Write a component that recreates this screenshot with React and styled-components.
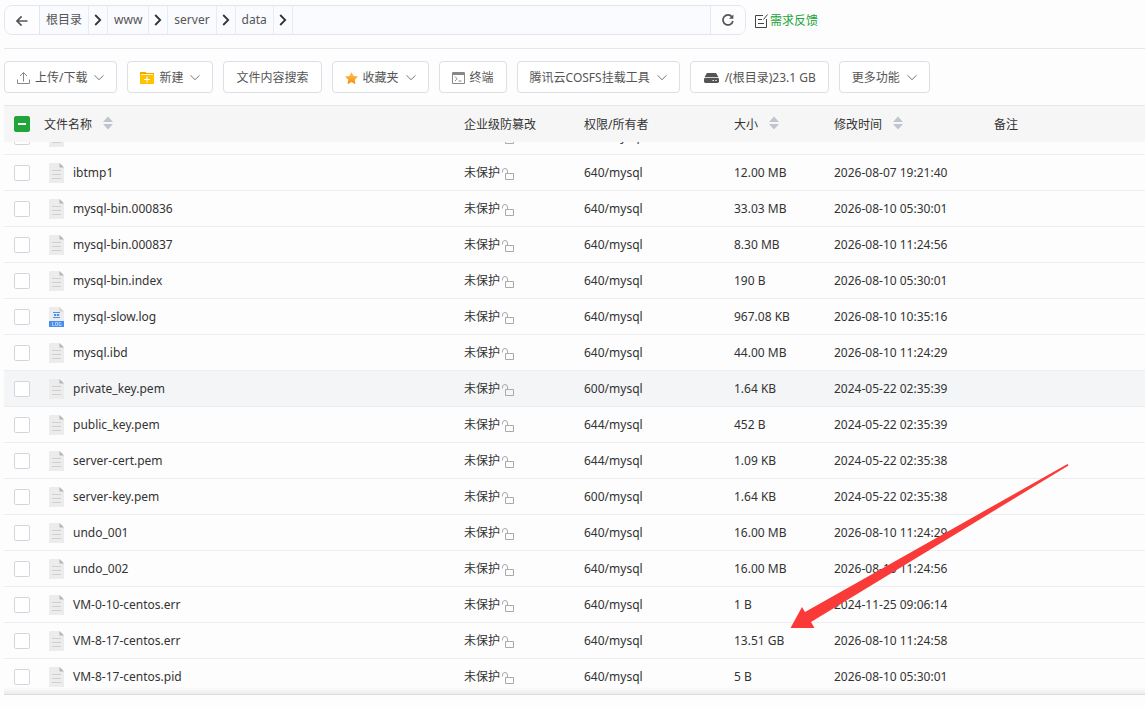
import React, { useLayoutEffect, useRef } from "react";
import styled, { createGlobalStyle } from "styled-components";

const GlobalStyle = createGlobalStyle`
  * {
    box-sizing: border-box;
  }
  body {
    margin: 0;
    background: #fdfdfd;
    color: #333;
    font-family: "Noto Sans", "Noto Sans CJK SC", sans-serif;
    font-size: 12px;
    line-height: 18px;
  }
  button, input {
    font: inherit;
    color: inherit;
    margin: 0;
  }
  svg {
    display: block;
    flex: none;
  }
`;

const Page = styled.main`
  position: relative;
  display: flex;
  flex-direction: column;
  height: 100vh;
  padding: 5px 0 12px 4px;
  overflow: hidden;
`;

const TopBar = styled.header`
  display: flex;
  align-items: center;
  gap: 9px;
  height: 44px;
  padding-bottom: 14px;
  border-bottom: 1px solid #e4e7f0;
`;

const PathBar = styled.nav`
  display: flex;
  flex: 0 1 742px;
  height: 30px;
  border: 1px solid #e2e6f0;
  border-radius: 8px;
  background: #fafbff;
  color: #555;
  overflow: hidden;
`;

const PathButton = styled.button`
  display: flex;
  align-items: center;
  justify-content: center;
  width: 35px;
  padding: 0;
  border: 0;
  border-${({ $side }) => $side}: 1px solid #e2e6f0;
  background: #fdfdff;
  color: #555;
`;

const Crumb = styled.a`
  display: flex;
  align-items: center;
  padding: 0 6px;
  border-right: 1px solid #e8ebf4;
  color: #555;
  text-decoration: none;
`;

const CrumbArrow = styled.span`
  display: flex;
  align-items: center;
  justify-content: center;
  width: 19px;
  border-right: 1px solid #e8ebf4;
  color: #333;
`;

const PathSpace = styled.div`
  flex: 1;
`;

const Feedback = styled.a`
  display: flex;
  align-items: center;
  gap: 2px;
  padding-top: 2px;
  color: #20a53a;
  text-decoration: none;
`;

const Toolbar = styled.div`
  display: flex;
  gap: 10px;
  padding: 12px 0;
`;

const ToolButton = styled.button`
  display: flex;
  align-items: center;
  gap: 5px;
  height: 32px;
  padding: 2px 12px 0;
  border: 1px solid #dcdfe6;
  border-radius: 4px;
  background: #fff;
  color: #555;
  white-space: nowrap;
`;

const TableBox = styled.div`
  position: relative;
  flex: 1;
  min-height: 0;
  display: flex;

  &::after {
    content: "";
    position: absolute;
    left: 0;
    right: 0;
    bottom: 0;
    height: 8px;
    background: linear-gradient(rgba(0, 0, 0, 0), rgba(0, 0, 0, 0.08));
    pointer-events: none;
  }
`;

const TableScroll = styled.div`
  flex: 1;
  overflow-y: auto;
  scrollbar-width: none;
`;

const Table = styled.table`
  width: 100%;
  table-layout: fixed;
  border-collapse: separate;
  border-spacing: 0;
`;

const Col = styled.col`
  width: ${({ $width }) => $width};
`;

const HeadCell = styled.th`
  position: sticky;
  top: 0;
  z-index: 1;
  height: 37px;
  padding: 0 10px;
  border-top: 1px solid #e4e6ee;
  background: #f6f6f6;
  font-weight: 400;
  text-align: left;
`;

const HeadLabel = styled.span`
  display: flex;
  align-items: flex-start;
  gap: 11px;
  padding-top: 2px;
`;

const Row = styled.tr`
  background: ${({ $active }) => ($active ? "#f4f5f7" : "#fdfdfd")};
`;

const Cell = styled.td`
  height: 36px;
  padding: 0 10px;
  border-bottom: 1px solid #ebedf0;
  white-space: nowrap;
`;

const FileName = styled.label`
  display: flex;
  align-items: center;
  gap: 9px;
  padding-left: 5px;
`;

const Guard = styled.span`
  display: flex;
  align-items: center;
  gap: 2px;
`;

const Check = styled.input.attrs({ type: "checkbox" })`
  appearance: none;
  display: block;
  width: 16px;
  height: 16px;
  border: 1px solid #d3d6de;
  border-radius: 2px;
  background: #fff;
`;

const CheckAll = styled(Check)`
  display: grid;
  place-items: center;
  border-color: #20a53a;
  background: #20a53a;

  &::after {
    content: "";
    width: 8px;
    height: 2px;
    background: #fff;
  }
`;

const Pointer = styled.svg`
  position: absolute;
  left: 790px;
  top: 463px;
  z-index: 2;
  pointer-events: none;
`;

const ChevronDown = () => (
  <Chevron width="10" height="10" viewBox="0 0 10 10" fill="none" stroke="#777">
    <path d="M0.5 2.3 5 6.7 9.5 2.3" />
  </Chevron>
);

const Chevron = styled.svg`
  margin-left: 2px;
`;

const ChevronRight = () => (
  <svg width="8" height="12" viewBox="0 0 8 12" fill="none" stroke="currentColor" strokeWidth="1.8">
    <path d="M1.2 1 6.2 6 1.2 11" />
  </svg>
);

const BackIcon = () => (
  <svg width="12" height="12" viewBox="0 0 12 12" fill="none" stroke="currentColor" strokeWidth="1.7">
    <path d="M11.5 7H1.2M5.6 2.4 1 7l4.6 4.6" />
  </svg>
);

const RefreshIcon = () => (
  <svg width="12" height="13" viewBox="0 0 12 13">
    <path d="M10 3.9A5 5 0 1 0 10.9 8" fill="none" stroke="currentColor" strokeWidth="1.7" />
    <path d="M11.4 1.4v4.4H7z" fill="currentColor" />
  </svg>
);

const FeedbackIcon = () => (
  <svg width="13" height="14" viewBox="0 0 13 14" fill="none" stroke="#444">
    <path d="M8 1.5H0.5v12h11V5M3 5.5h4M3 9.5h6M8.5 5.5l4-5" />
  </svg>
);

const UploadIcon = () => (
  <svg width="13" height="12" viewBox="0 0 13 12" fill="none" stroke="#888">
    <path d="M0.5 7.500v4h12v-4M6.500 9.500V1M3 4l3.500-3.500L10 4" />
  </svg>
);

const NewFolderIcon = () => (
  <svg width="14" height="12" viewBox="0 0 14 12">
    <path d="M0 0h5.5l1 1H14v11H0z" fill="#f5a800" />
    <path d="M0 3h14v9H0z" fill="#ffc300" />
    <path d="M1 2.5h12" stroke="#fff3c4" />
    <path d="M4 7.5h6M7 4.5v6" stroke="#fff" />
  </svg>
);

const StarIcon = () => (
  <svg width="13" height="13" viewBox="0 0 13 13">
    <defs>
      <linearGradient id="star" x1="0" y1="0" x2="0" y2="1">
        <stop offset="0" stopColor="#ffc84a" />
        <stop offset="1" stopColor="#f58a0c" />
      </linearGradient>
    </defs>
    <path
      d="M6.5 0 8.5 4l4.500.6-3.300 3.100.8 4.500-4-2.100-4 2.100.8-4.500L0 4.600 4.500 4z"
      fill="url(#star)"
    />
  </svg>
);

const TerminalIcon = () => (
  <svg width="13" height="12" viewBox="0 0 13 12" fill="none" stroke="#888">
    <path d="M0.5 0.5h12v11H0.5z" />
    <path d="M0.5 2h12" strokeWidth="2" />
    <path d="M3 4.5 5.2 6.7 3 9M6.5 9h3" />
  </svg>
);

const DiskIcon = () => (
  <svg width="17" height="10" viewBox="0 0 17 10">
    <path d="M4 0h9l2.400 4H1.600z" fill="#555" />
    <rect x="1" y="4.8" width="15" height="5.2" rx="1.4" fill="#555" />
    <path d="M9.500 7.500h1.300M12.300 7.500h1.300" stroke="#fff" strokeWidth="1.2" />
  </svg>
);

const SortIcon = () => (
  <svg width="10" height="14" viewBox="0 0 10 14" fill="#c0c4cc">
    <path d="M5 0.500l5 5.500H0zM5 13.500l5-5.500H0z" />
  </svg>
);

const LockIcon = () => (
  <svg width="13" height="14" viewBox="0 0 13 14" fill="none" stroke="#aaa">
    <path d="M3.500 7.500h8v6h-8zM5.500 7.500V5a2.400 2.400 0 0 0-5 0v1.500" />
  </svg>
);

const FileIcon = () => (
  <svg width="15" height="20" viewBox="0 0 15 20">
    <path d="M0 0h10.5L15 4.5V20H0z" fill="#ececec" />
    <path d="M10.5 0 15 4.5h-4.5z" fill="#b4b4b4" />
    <path d="M3 7.5h9M3 11.5h9M3 15.5h9" stroke="#cfcfcf" />
  </svg>
);

const LogIcon = () => (
  <svg width="15" height="20" viewBox="0 0 15 20">
    <path d="M0 0h10.5L15 4.5V20H0z" fill="#ececec" />
    <path d="M10.5 0 15 4.5h-4.5z" fill="#d8d6c4" />
    <path d="M4 5.5h7M4 10.5h7M5 7.5h2v1H5M8 7.5h2v1H8" fill="none" stroke="#4a90ee" />
    <path d="M0 14h15v6H0z" fill="#4a8ff0" />
    <path
      d="M3.5 15v3.5h2M6.5 15.5h2v3h-2zM12 15.5h-2v3h2v-1.5"
      fill="none"
      stroke="#b9d6ff"
      strokeWidth="0.8"
    />
  </svg>
);

const files = [
  ["ibdata1", "640/mysql", "", ""],
  ["ibtmp1", "640/mysql", "12.00 MB", "2026-08-07 19:21:40"],
  ["mysql-bin.000836", "640/mysql", "33.03 MB", "2026-08-10 05:30:01"],
  ["mysql-bin.000837", "640/mysql", "8.30 MB", "2026-08-10 11:24:56"],
  ["mysql-bin.index", "640/mysql", "190 B", "2026-08-10 05:30:01"],
  ["mysql-slow.log", "640/mysql", "967.08 KB", "2026-08-10 10:35:16"],
  ["mysql.ibd", "640/mysql", "44.00 MB", "2026-08-10 11:24:29"],
  ["private_key.pem", "600/mysql", "1.64 KB", "2024-05-22 02:35:39"],
  ["public_key.pem", "644/mysql", "452 B", "2024-05-22 02:35:39"],
  ["server-cert.pem", "644/mysql", "1.09 KB", "2024-05-22 02:35:38"],
  ["server-key.pem", "600/mysql", "1.64 KB", "2024-05-22 02:35:38"],
  ["undo_001", "640/mysql", "16.00 MB", "2026-08-10 11:24:29"],
  ["undo_002", "640/mysql", "16.00 MB", "2026-08-10 11:24:56"],
  ["VM-0-10-centos.err", "640/mysql", "1 B", "2024-11-25 09:06:14"],
  ["VM-8-17-centos.err", "640/mysql", "13.51 GB", "2026-08-10 11:24:58"],
  ["VM-8-17-centos.pid", "640/mysql", "5 B", "2026-08-10 05:30:01"],
];

const crumbs = ["根目录", "www", "server", "data"];

const columns = [
  { title: "文件名称", width: "420px", sort: true },
  { title: "企业级防篡改", width: "120px" },
  { title: "权限/所有者", width: "150px" },
  { title: "大小", width: "100px", sort: true },
  { title: "修改时间", width: "160px", sort: true },
  { title: "备注", width: "auto" },
];

const PathNav = () => (
  <PathBar>
    <PathButton $side="right" aria-label="返回">
      <BackIcon />
    </PathButton>
    {crumbs.map((name) => (
      <React.Fragment key={name}>
        <Crumb href="#">{name}</Crumb>
        <CrumbArrow>
          <ChevronRight />
        </CrumbArrow>
      </React.Fragment>
    ))}
    <PathSpace />
    <PathButton $side="left" aria-label="刷新">
      <RefreshIcon />
    </PathButton>
  </PathBar>
);

const Tools = () => (
  <Toolbar>
    <ToolButton>
      <UploadIcon />
      上传/下载
      <ChevronDown />
    </ToolButton>
    <ToolButton>
      <NewFolderIcon />
      新建
      <ChevronDown />
    </ToolButton>
    <ToolButton>文件内容搜索</ToolButton>
    <ToolButton>
      <StarIcon />
      收藏夹
      <ChevronDown />
    </ToolButton>
    <ToolButton>
      <TerminalIcon />
      终端
    </ToolButton>
    <ToolButton>
      腾讯云COSFS挂载工具
      <ChevronDown />
    </ToolButton>
    <ToolButton>
      <DiskIcon />
      /(根目录)23.1 GB
    </ToolButton>
    <ToolButton>
      更多功能
      <ChevronDown />
    </ToolButton>
  </Toolbar>
);

const FileTable = () => {
  const box = useRef(null);

  // open the list at its last file
  useLayoutEffect(() => {
    box.current.scrollTop = box.current.scrollHeight;
  }, []);

  return (
    <TableBox>
      <TableScroll ref={box}>
        <Table>
          <colgroup>
            <Col $width="30px" />
            {columns.map((col) => (
              <Col key={col.title} $width={col.width} />
            ))}
          </colgroup>
          <thead>
            <tr>
              <HeadCell>
                <CheckAll aria-label="全选" />
              </HeadCell>
              {columns.map((col) => (
                <HeadCell key={col.title}>
                  <HeadLabel>
                    {col.title}
                    {col.sort && <SortIcon />}
                  </HeadLabel>
                </HeadCell>
              ))}
            </tr>
          </thead>
          <tbody>
            {files.map(([name, owner, size, time]) => (
              <Row key={name} $active={name === "private_key.pem"}>
                <Cell>
                  <Check id={name} />
                </Cell>
                <Cell>
                  <FileName htmlFor={name}>
                    {name.endsWith(".log") ? <LogIcon /> : <FileIcon />}
                    {name}
                  </FileName>
                </Cell>
                <Cell>
                  <Guard>
                    未保护
                    <LockIcon />
                  </Guard>
                </Cell>
                <Cell>{owner}</Cell>
                <Cell>{size}</Cell>
                <Cell>{time}</Cell>
                <Cell />
              </Row>
            ))}
          </tbody>
        </Table>
      </TableScroll>
    </TableBox>
  );
};

const App = () => (
  <>
    <GlobalStyle />
    <Page>
      <TopBar>
        <PathNav />
        <Feedback href="#">
          <FeedbackIcon />
          需求反馈
        </Feedback>
      </TopBar>
      <Tools />
      <FileTable />
      <Pointer width="280" height="166" viewBox="0 0 280 166" fill="#fa3a38">
        <path d="M0.5 165 12 144l3 5L277.5 1l1 1.5L21 159l3.5 6z" />
      </Pointer>
    </Page>
  </>
);

export default App;
